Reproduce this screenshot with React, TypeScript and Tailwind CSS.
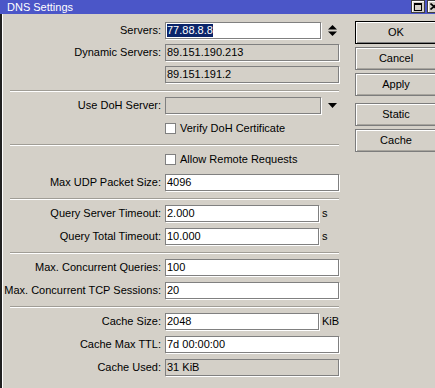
import React from "react";

const FONT = { fontFamily: '"Liberation Sans", Arial, sans-serif' };

function Label({ text }: { text: string }) {
  return (
    <div className="w-[163px] shrink-0 text-right text-[11px] leading-[17px] text-black whitespace-nowrap pr-[4px]">
      {text}
    </div>
  );
}

function Box({
  value,
  cls,
  ro,
  selected,
}: {
  value: string;
  cls: string;
  ro?: boolean;
  selected?: boolean;
}) {
  return (
    <div
      className={
        "h-[17px] shrink-0 border border-[#808080] flex items-center pl-[1px] text-[11px] text-black overflow-hidden whitespace-nowrap shadow-[1px_1px_0_#ffffff] " +
        (ro ? "bg-[#d4d0c8] " : "bg-white ") +
        cls
      }
    >
      {selected ? (
        <span className="bg-[#0a246a] text-white leading-[13px] px-0">{value}</span>
      ) : (
        <span className="leading-[13px]">{value}</span>
      )}
    </div>
  );
}

function Sep() {
  return (
    <div className="ml-[8px] w-[329px] h-[2px] border-t border-t-[#a09d96] border-b border-b-white mt-[7px] mb-[5px]" />
  );
}

function Check({ text }: { text: string }) {
  return (
    <div className="flex items-center h-[17px]">
      <div className="w-[163px] shrink-0" />
      <div className="w-[11px] h-[11px] bg-white border border-[#808080] shrink-0" />
      <span className="ml-[4px] text-[11px] text-black whitespace-nowrap">{text}</span>
    </div>
  );
}

function Btn({ text, def }: { text: string; def?: boolean }) {
  return (
    <div
      className={
        "w-[82px] h-[23px] flex items-center justify-center text-[11px] text-black bg-[#d4d0c8] " +
        (def
          ? "border border-black shadow-[inset_1px_1px_0_#ffffff,inset_-1px_-1px_0_#808080]"
          : "border border-[#7c7c7c] shadow-[inset_1px_1px_0_#ffffff,inset_-1px_-1px_0_#a8a59e]")
      }
    >
      {text}
    </div>
  );
}

export default function App() {
  return (
    <div className="w-[435px] h-[388px] overflow-hidden bg-[#d4d0c8] flex flex-col" style={FONT}>
      {/* Title bar */}
      <div className="h-[14px] bg-[#4b56c8] flex items-center relative shrink-0">
        <span className="ml-[7px] text-white text-[11px] leading-[14px]">DNS Settings</span>
        <div className="absolute left-[411px] top-[0px] w-[14px] h-[13px] bg-[#d4d0c8] border border-[#404040] shadow-[inset_1px_1px_0_#ffffff] flex items-center justify-center">
          <div className="w-[8px] h-[8px] border border-black border-t-2" />
        </div>
        <div className="absolute left-[427px] top-[0px] w-[14px] h-[13px] bg-[#d4d0c8] border border-[#404040] shadow-[inset_1px_1px_0_#ffffff] flex items-center justify-center">
          <svg width="8" height="7" viewBox="0 0 8 7">
            <path d="M0.5 0.5 L7.5 6.5 M7.5 0.5 L0.5 6.5" stroke="black" strokeWidth="1.6" />
          </svg>
        </div>
      </div>

      <div className="flex flex-1 border-l-2 border-l-[#202020] shadow-[inset_1px_0_0_#ffffff]">
        {/* Form */}
        <div className="w-[337px] shrink-0 flex flex-col pt-[8px]">
          {/* Section 1 */}
          <div className="flex flex-col gap-[5px]">
            <div className="flex items-center">
              <Label text="Servers:" />
              <Box value="77.88.8.8" cls="w-[156px]" selected />
              <svg className="ml-[7px]" width="9" height="11" viewBox="0 0 9 11">
                <path d="M4.5 0 L9 4.5 L0 4.5 Z" fill="black" />
                <path d="M0 6.5 L9 6.5 L4.5 11 Z" fill="black" />
              </svg>
            </div>
            <div className="flex items-center">
              <Label text="Dynamic Servers:" />
              <Box value="89.151.190.213" cls="w-[174px]" ro />
            </div>
            <div className="flex items-center">
              <div className="w-[163px] shrink-0" />
              <Box value="89.151.191.2" cls="w-[174px]" ro />
            </div>
          </div>
          <Sep />
          {/* Section 2 */}
          <div className="flex flex-col gap-[6px]">
            <div className="flex items-center">
              <Label text="Use DoH Server:" />
              <Box value="" cls="w-[156px]" ro />
              <svg className="ml-[7px]" width="9" height="5" viewBox="0 0 9 5">
                <path d="M0 0 L9 0 L4.5 5 Z" fill="black" />
              </svg>
            </div>
            <Check text="Verify DoH Certificate" />
          </div>
          <Sep />
          {/* Section 3 */}
          <div className="flex flex-col gap-[6px]">
            <Check text="Allow Remote Requests" />
            <div className="flex items-center">
              <Label text="Max UDP Packet Size:" />
              <Box value="4096" cls="w-[174px]" />
            </div>
          </div>
          <Sep />
          {/* Section 4 */}
          <div className="flex flex-col gap-[6px]">
            <div className="flex items-center">
              <Label text="Query Server Timeout:" />
              <Box value="2.000" cls="w-[154px]" />
              <span className="ml-[3px] text-[11px] text-black">s</span>
            </div>
            <div className="flex items-center">
              <Label text="Query Total Timeout:" />
              <Box value="10.000" cls="w-[154px]" />
              <span className="ml-[3px] text-[11px] text-black">s</span>
            </div>
          </div>
          <Sep />
          {/* Section 5 */}
          <div className="flex flex-col gap-[6px]">
            <div className="flex items-center">
              <Label text="Max. Concurrent Queries:" />
              <Box value="100" cls="w-[174px]" />
            </div>
            <div className="flex items-center">
              <Label text="Max. Concurrent TCP Sessions:" />
              <Box value="20" cls="w-[174px]" />
            </div>
          </div>
          <Sep />
          {/* Section 6 */}
          <div className="flex flex-col gap-[6px]">
            <div className="flex items-center">
              <Label text="Cache Size:" />
              <Box value="2048" cls="w-[154px]" />
              <span className="ml-[3px] text-[11px] text-black">KiB</span>
            </div>
            <div className="flex items-center">
              <Label text="Cache Max TTL:" />
              <Box value="7d 00:00:00" cls="w-[174px]" />
            </div>
            <div className="flex items-center">
              <Label text="Cache Used:" />
              <Box value="31 KiB" cls="w-[174px]" ro />
            </div>
          </div>
        </div>

        {/* Buttons */}
        <div className="ml-[16px] pt-[7px] flex flex-col shrink-0">
          <div className="flex flex-col gap-[3px]">
            <Btn text="OK" def />
            <Btn text="Cancel" />
            <Btn text="Apply" />
          </div>
          <div className="flex flex-col gap-[3px] mt-[7px]">
            <Btn text="Static" />
            <Btn text="Cache" />
          </div>
        </div>
      </div>
    </div>
  );
}
